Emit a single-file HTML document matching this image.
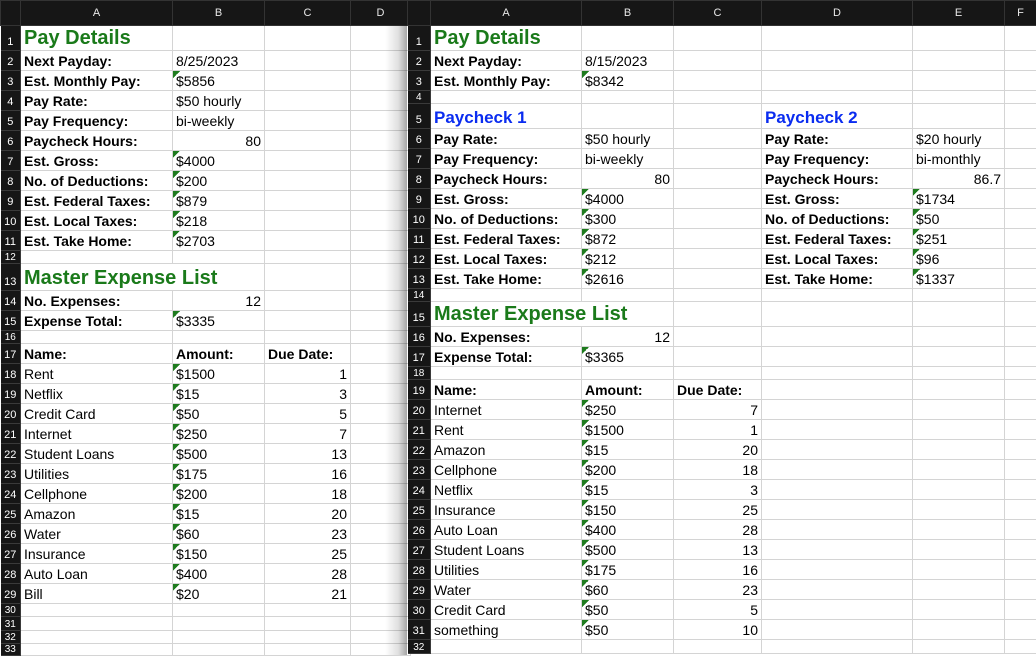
<!DOCTYPE html>
<html><head><meta charset="utf-8">
<style>
body{margin:0;width:1036px;height:655px;overflow:hidden;background:#fff;font-family:"Liberation Sans",Arial,sans-serif;position:relative}
table{border-collapse:collapse;table-layout:fixed;position:absolute;top:0}
td{border:1px solid #d4d4d4;font-size:14px;color:#000;padding:0 0 1px 3px;vertical-align:bottom;white-space:nowrap;overflow:hidden;line-height:15px}
tr.h td{background:#161616;color:#e8e8e8;font-size:11px;text-align:center;vertical-align:middle;border:1px solid #333;padding:0;height:24px;line-height:12px}
td.n{background:#161616;color:#fff;font-size:11px;line-height:11px;text-align:center;padding:0 0 2px 0;border:1px solid #3a3a3a;border-left:none}
tr.s td.n{font-size:10px;line-height:10px;padding:0}
td.corner{background:#161616 linear-gradient(135deg,transparent 50%,#555 50%) no-repeat 4px 5px/14px 14px}
b{font-weight:bold}
.g{color:#1a7a1a;font-weight:bold;font-size:20px;line-height:22px}
.bl{color:#0a2cf0;font-weight:bold;font-size:17px;line-height:19px}
.t{background:linear-gradient(135deg,#1e7b1e 50%,transparent 50%) no-repeat 0 0/7px 7px}
.r{text-align:right;padding-right:3px}
#L{left:0;width:410px}
#R{left:407px;width:629px}
#sh{position:absolute;left:385px;top:25px;width:22px;height:630px;background:linear-gradient(90deg,rgba(0,0,0,0),rgba(0,0,0,.12) 60%,rgba(0,0,0,.35));}
</style></head><body>
<table id="L">
<colgroup><col style="width:20px"><col style="width:152px"><col style="width:92px"><col style="width:86px"><col style="width:60px"></colgroup>
<tr class="h"><td class="corner"></td><td>A</td><td>B</td><td>C</td><td>D</td></tr>
<tr style="height:25px"><td class="n">1</td><td class="g">Pay Details</td><td></td><td></td><td></td></tr>
<tr style="height:20px"><td class="n">2</td><td><b>Next Payday:</b></td><td>8/25/2023</td><td></td><td></td></tr>
<tr style="height:20px"><td class="n">3</td><td><b>Est. Monthly Pay:</b></td><td class="t">$5856</td><td></td><td></td></tr>
<tr style="height:20px"><td class="n">4</td><td><b>Pay Rate:</b></td><td>$50 hourly</td><td></td><td></td></tr>
<tr style="height:20px"><td class="n">5</td><td><b>Pay Frequency:</b></td><td>bi-weekly</td><td></td><td></td></tr>
<tr style="height:20px"><td class="n">6</td><td><b>Paycheck Hours:</b></td><td class="r">80</td><td></td><td></td></tr>
<tr style="height:20px"><td class="n">7</td><td><b>Est. Gross:</b></td><td class="t">$4000</td><td></td><td></td></tr>
<tr style="height:20px"><td class="n">8</td><td><b>No. of Deductions:</b></td><td class="t">$200</td><td></td><td></td></tr>
<tr style="height:20px"><td class="n">9</td><td><b>Est. Federal Taxes:</b></td><td class="t">$879</td><td></td><td></td></tr>
<tr style="height:20px"><td class="n">10</td><td><b>Est. Local Taxes:</b></td><td class="t">$218</td><td></td><td></td></tr>
<tr style="height:20px"><td class="n">11</td><td><b>Est. Take Home:</b></td><td class="t">$2703</td><td></td><td></td></tr>
<tr class="s" style="height:13px"><td class="n">12</td><td></td><td></td><td></td><td></td></tr>
<tr style="height:27px"><td class="n">13</td><td class="g" colspan="2">Master Expense List</td><td></td><td></td></tr>
<tr style="height:20px"><td class="n">14</td><td><b>No. Expenses:</b></td><td class="r">12</td><td></td><td></td></tr>
<tr style="height:20px"><td class="n">15</td><td><b>Expense Total:</b></td><td class="t">$3335</td><td></td><td></td></tr>
<tr class="s" style="height:13px"><td class="n">16</td><td></td><td></td><td></td><td></td></tr>
<tr style="height:20px"><td class="n">17</td><td><b>Name:</b></td><td><b>Amount:</b></td><td><b>Due Date:</b></td><td></td></tr>
<tr style="height:20px"><td class="n">18</td><td>Rent</td><td class="t">$1500</td><td class="r">1</td><td></td></tr>
<tr style="height:20px"><td class="n">19</td><td>Netflix</td><td class="t">$15</td><td class="r">3</td><td></td></tr>
<tr style="height:20px"><td class="n">20</td><td>Credit Card</td><td class="t">$50</td><td class="r">5</td><td></td></tr>
<tr style="height:20px"><td class="n">21</td><td>Internet</td><td class="t">$250</td><td class="r">7</td><td></td></tr>
<tr style="height:20px"><td class="n">22</td><td>Student Loans</td><td class="t">$500</td><td class="r">13</td><td></td></tr>
<tr style="height:20px"><td class="n">23</td><td>Utilities</td><td class="t">$175</td><td class="r">16</td><td></td></tr>
<tr style="height:20px"><td class="n">24</td><td>Cellphone</td><td class="t">$200</td><td class="r">18</td><td></td></tr>
<tr style="height:20px"><td class="n">25</td><td>Amazon</td><td class="t">$15</td><td class="r">20</td><td></td></tr>
<tr style="height:20px"><td class="n">26</td><td>Water</td><td class="t">$60</td><td class="r">23</td><td></td></tr>
<tr style="height:20px"><td class="n">27</td><td>Insurance</td><td class="t">$150</td><td class="r">25</td><td></td></tr>
<tr style="height:20px"><td class="n">28</td><td>Auto Loan</td><td class="t">$400</td><td class="r">28</td><td></td></tr>
<tr style="height:20px"><td class="n">29</td><td>Bill</td><td class="t">$20</td><td class="r">21</td><td></td></tr>
<tr class="s" style="height:13px"><td class="n">30</td><td></td><td></td><td></td><td></td></tr>
<tr class="s" style="height:14px"><td class="n">31</td><td></td><td></td><td></td><td></td></tr>
<tr class="s" style="height:13px"><td class="n">32</td><td></td><td></td><td></td><td></td></tr>
<tr class="s" style="height:12px"><td class="n">33</td><td></td><td></td><td></td><td></td></tr>
</table>
<div id="sh"></div>
<table id="R">
<colgroup><col style="width:23px"><col style="width:151px"><col style="width:92px"><col style="width:88px"><col style="width:151px"><col style="width:92px"><col style="width:32px"></colgroup>
<tr class="h"><td class="corner"></td><td>A</td><td>B</td><td>C</td><td>D</td><td>E</td><td>F</td></tr>
<tr style="height:25px"><td class="n">1</td><td class="g">Pay Details</td><td></td><td></td><td></td><td></td><td></td></tr>
<tr style="height:20px"><td class="n">2</td><td><b>Next Payday:</b></td><td>8/15/2023</td><td></td><td></td><td></td><td></td></tr>
<tr style="height:20px"><td class="n">3</td><td><b>Est. Monthly Pay:</b></td><td class="t">$8342</td><td></td><td></td><td></td><td></td></tr>
<tr class="s" style="height:13px"><td class="n">4</td><td></td><td></td><td></td><td></td><td></td><td></td></tr>
<tr style="height:25px"><td class="n">5</td><td class="bl">Paycheck 1</td><td></td><td></td><td class="bl">Paycheck 2</td><td></td><td></td></tr>
<tr style="height:20px"><td class="n">6</td><td><b>Pay Rate:</b></td><td>$50 hourly</td><td></td><td><b>Pay Rate:</b></td><td>$20 hourly</td><td></td></tr>
<tr style="height:20px"><td class="n">7</td><td><b>Pay Frequency:</b></td><td>bi-weekly</td><td></td><td><b>Pay Frequency:</b></td><td>bi-monthly</td><td></td></tr>
<tr style="height:20px"><td class="n">8</td><td><b>Paycheck Hours:</b></td><td class="r">80</td><td></td><td><b>Paycheck Hours:</b></td><td class="r">86.7</td><td></td></tr>
<tr style="height:20px"><td class="n">9</td><td><b>Est. Gross:</b></td><td class="t">$4000</td><td></td><td><b>Est. Gross:</b></td><td class="t">$1734</td><td></td></tr>
<tr style="height:20px"><td class="n">10</td><td><b>No. of Deductions:</b></td><td class="t">$300</td><td></td><td><b>No. of Deductions:</b></td><td class="t">$50</td><td></td></tr>
<tr style="height:20px"><td class="n">11</td><td><b>Est. Federal Taxes:</b></td><td class="t">$872</td><td></td><td><b>Est. Federal Taxes:</b></td><td class="t">$251</td><td></td></tr>
<tr style="height:20px"><td class="n">12</td><td><b>Est. Local Taxes:</b></td><td class="t">$212</td><td></td><td><b>Est. Local Taxes:</b></td><td class="t">$96</td><td></td></tr>
<tr style="height:20px"><td class="n">13</td><td><b>Est. Take Home:</b></td><td class="t">$2616</td><td></td><td><b>Est. Take Home:</b></td><td class="t">$1337</td><td></td></tr>
<tr class="s" style="height:13px"><td class="n">14</td><td></td><td></td><td></td><td></td><td></td><td></td></tr>
<tr style="height:25px"><td class="n">15</td><td class="g" colspan="2">Master Expense List</td><td></td><td></td><td></td><td></td></tr>
<tr style="height:20px"><td class="n">16</td><td><b>No. Expenses:</b></td><td class="r">12</td><td></td><td></td><td></td><td></td></tr>
<tr style="height:20px"><td class="n">17</td><td><b>Expense Total:</b></td><td class="t">$3365</td><td></td><td></td><td></td><td></td></tr>
<tr class="s" style="height:13px"><td class="n">18</td><td></td><td></td><td></td><td></td><td></td><td></td></tr>
<tr style="height:20px"><td class="n">19</td><td><b>Name:</b></td><td><b>Amount:</b></td><td><b>Due Date:</b></td><td></td><td></td><td></td></tr>
<tr style="height:20px"><td class="n">20</td><td>Internet</td><td class="t">$250</td><td class="r">7</td><td></td><td></td><td></td></tr>
<tr style="height:20px"><td class="n">21</td><td>Rent</td><td class="t">$1500</td><td class="r">1</td><td></td><td></td><td></td></tr>
<tr style="height:20px"><td class="n">22</td><td>Amazon</td><td class="t">$15</td><td class="r">20</td><td></td><td></td><td></td></tr>
<tr style="height:20px"><td class="n">23</td><td>Cellphone</td><td class="t">$200</td><td class="r">18</td><td></td><td></td><td></td></tr>
<tr style="height:20px"><td class="n">24</td><td>Netflix</td><td class="t">$15</td><td class="r">3</td><td></td><td></td><td></td></tr>
<tr style="height:20px"><td class="n">25</td><td>Insurance</td><td class="t">$150</td><td class="r">25</td><td></td><td></td><td></td></tr>
<tr style="height:20px"><td class="n">26</td><td>Auto Loan</td><td class="t">$400</td><td class="r">28</td><td></td><td></td><td></td></tr>
<tr style="height:20px"><td class="n">27</td><td>Student Loans</td><td class="t">$500</td><td class="r">13</td><td></td><td></td><td></td></tr>
<tr style="height:20px"><td class="n">28</td><td>Utilities</td><td class="t">$175</td><td class="r">16</td><td></td><td></td><td></td></tr>
<tr style="height:20px"><td class="n">29</td><td>Water</td><td class="t">$60</td><td class="r">23</td><td></td><td></td><td></td></tr>
<tr style="height:20px"><td class="n">30</td><td>Credit Card</td><td class="t">$50</td><td class="r">5</td><td></td><td></td><td></td></tr>
<tr style="height:20px"><td class="n">31</td><td>something</td><td class="t">$50</td><td class="r">10</td><td></td><td></td><td></td></tr>
<tr class="s" style="height:14px"><td class="n">32</td><td></td><td></td><td></td><td></td><td></td><td></td></tr>
</table>
</body></html>
